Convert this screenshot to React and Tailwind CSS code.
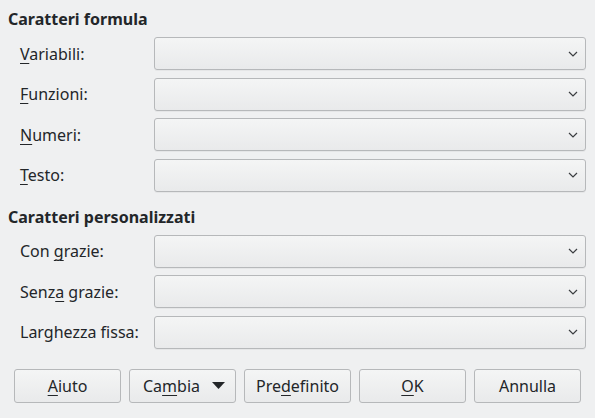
import { useState } from "react";

const font = { fontFamily: '"Noto Sans", "DejaVu Sans", sans-serif' };

const Mnemonic = ({ text, index }) => {
    if (index === undefined || index < 0) return <>{text}</>;
    return (
        <>
            {text.slice(0, index)}
            <span className="underline decoration-1 underline-offset-[3px]">{text[index]}</span>
            {text.slice(index + 1)}
        </>
    );
};

const Chevron = () => (
    <svg width="10" height="6" viewBox="0 0 10 6" className="shrink-0">
        <path d="M1 1 L5 5 L9 1" fill="none" stroke="#3b3e41" strokeWidth="1.2" />
    </svg>
);

const Combo = () => (
    <button className="flex-1 h-[33px] flex items-center justify-end pr-[7px] rounded-[3px] border border-[#b6b8ba] bg-gradient-to-b from-[#f4f5f5] to-[#e9eaeb] shadow-[0_1px_0_rgba(0,0,0,0.04)]">
        <Chevron />
    </button>
);

const Row = ({ label, index }) => (
    <div className="flex items-center">
        <label className="w-[146px] pl-[12px] text-[16px] text-[#232629]">
            <Mnemonic text={label} index={index} />
        </label>
        <Combo />
    </div>
);

const Section = ({ title, rows }) => (
    <div className="flex flex-col">
        <h2 className="text-[16px] font-bold text-[#232629] h-[30px] mb-[3px] flex items-center">{title}</h2>
        <div className="flex flex-col gap-[7.6px]">
            {rows.map((r) => (
                <Row key={r.label} label={r.label} index={r.index} />
            ))}
        </div>
    </div>
);

const Button = ({ label, index, menu }) => (
    <button
        className={`w-[107px] h-[34px] flex items-center rounded-[3px] border border-[#b6b8ba] bg-gradient-to-b from-[#f4f5f5] to-[#e9eaeb] text-[16px] text-[#232629] ${
            menu ? "justify-between pl-[13px] pr-[10px]" : "justify-center"
        }`}
    >
        <span>
            <Mnemonic text={label} index={index} />
        </span>
        {menu && (
            <svg width="13" height="7" viewBox="0 0 13 7">
                <path d="M0 0 H13 L6.5 7 Z" fill="#232629" />
            </svg>
        )}
    </button>
);

const App = () => {
    const [formula] = useState([
        { label: "Variabili:", index: 0 },
        { label: "Funzioni:", index: 0 },
        { label: "Numeri:", index: 0 },
        { label: "Testo:", index: 0 },
    ]);
    const [custom] = useState([
        { label: "Con grazie:", index: 4 },
        { label: "Senza grazie:", index: 4 },
        { label: "Larghezza fissa:", index: 11 },
    ]);

    return (
        <div style={font} className="w-[595px] h-[418px] bg-[#eff0f1] pl-[8px] pr-[9px] pt-[4px] flex flex-col">
            <Section title="Caratteri formula" rows={formula} />
            <div className="mt-[10px]">
                <Section title="Caratteri personalizzati" rows={custom} />
            </div>
            <div className="flex gap-[8px] pl-[6px] mt-[20px]">
                <Button label="Aiuto" index={0} />
                <Button label="Cambia" index={2} menu />
                <Button label="Predefinito" index={3} />
                <Button label="OK" index={0} />
                <Button label="Annulla" />
            </div>
        </div>
    );
};

export default App;
